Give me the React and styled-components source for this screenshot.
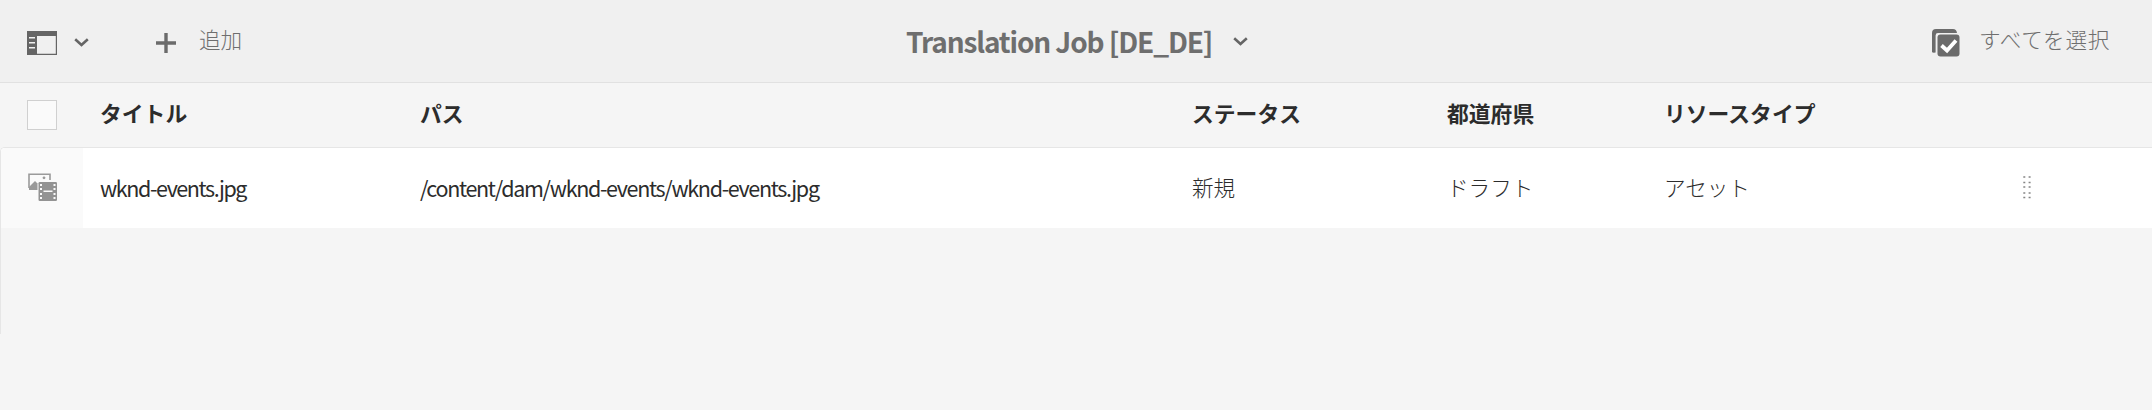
import React from "react";
import styled, { createGlobalStyle } from "styled-components";

const GlobalStyle = createGlobalStyle`
  * { box-sizing: border-box; }
  body {
    margin: 0;
    background: #f5f5f5;
    color: #2c2c2c;
    font-family: "Noto Sans CJK JP", "Noto Sans", sans-serif;
    font-size: 21.6px;
  }
  svg { display: block; flex: none; }
`;

const Page = styled.div`
  width: 100%;
  height: 410px;
  overflow: hidden;
`;

const ActionBar = styled.header`
  display: grid;
  grid-template-columns: 1fr auto 1fr;
  align-items: center;
  height: 83px;
  padding: 0 42px 0 27px;
  background: #f0f0f0;
  border-bottom: 1px solid #e1e1e1;
  color: #6e6e6e;
`;

const ActionGroup = styled.div`
  display: flex;
  align-items: center;
  padding-top: 3px;
  justify-content: ${(p) => (p.$end ? "flex-end" : "flex-start")};
`;

const Action = styled.button`
  display: flex;
  align-items: center;
  gap: ${(p) => p.$gap}px;
  margin-left: ${(p) => p.$offset || 0}px;
  padding: 0;
  border: 0;
  background: none;
  color: inherit;
  font: inherit;
  font-weight: 300;
`;

const ActionLabel = styled.span`
  line-height: 32px;
  padding-bottom: 8px;
  letter-spacing: ${(p) => p.$tracking || 0}px;
`;

const JobTitle = styled.h1`
  display: flex;
  align-items: center;
  gap: 21px;
  margin: 0;
  padding-left: 17px;
  font-size: 28px;
  font-weight: 700;
  line-height: 40px;
`;

const TitleText = styled.span`
  width: 306px;
  padding-bottom: 1px;
  white-space: nowrap;
  letter-spacing: -1.12px;
`;

const Row = styled.div`
  display: grid;
  grid-template-columns: ${(p) => p.$lead}px 320px 772px 255px 217px 359px 1fr;
`;

const HeaderRow = styled(Row)`
  height: 64px;
  font-size: 21.8px;
  font-weight: 700;
`;

const TableBody = styled.div`
  height: 187px;
  border-top: 1px solid #e6e6e6;
  border-left: 1px solid #e6e6e6;
  border-top-left-radius: 5px;
  overflow: hidden;
`;

const ItemRow = styled(Row)`
  height: 80px;
  background: #fff;
`;

const Cell = styled.div`
  display: flex;
  align-items: center;
  padding: 0 0 ${(p) => p.$lift || 0}px 17px;
  white-space: nowrap;
`;

const LatinCell = styled(Cell)`
  font-size: 21.5px;
  letter-spacing: ${(p) => p.$tracking}px;
`;

const ValueCell = styled(Cell)`
  font-weight: 300;
`;

const SelectCell = styled.div`
  padding: 17px 0 0 27px;
`;

const Checkbox = styled.div`
  width: 30px;
  height: 30px;
  background: #fafafa;
  border: 1px solid #d0d0d0;
`;

const ThumbCell = styled.div`
  padding: 24px 0 0 26px;
  background: #fafafa;
`;

const RailIcon = () => (
  <svg width="30" height="24" viewBox="0 0 30 24">
    <path fill="#656565" fillRule="evenodd" d="M0 0H30V24H0ZM10 5V22.8H28.8V5Z" />
    <path fill="none" stroke="#f0f0f0" strokeWidth="1.5" d="M2 6.7H8M2 11.7H8M2 16.7H8" />
  </svg>
);

const ChevronIcon = () => (
  <svg width="15" height="9" viewBox="0 0 15 9">
    <path d="M1.2 1.3L7.5 7L13.8 1.3" fill="none" stroke="#656565" strokeWidth="2.6" />
  </svg>
);

const PlusIcon = () => (
  <svg width="20" height="20" viewBox="0 0 20 20">
    <path d="M10 0V20M0 10H20" stroke="#6b6b6b" strokeWidth="3.4" />
  </svg>
);

const SelectAllIcon = () => (
  <svg width="28" height="28" viewBox="0 0 28 28">
    <path
      d="M0 23V4Q0 0 4 0H21Q24.5 0 25 4H6Q3.6 4 3.6 6.4V23.5Q0.5 24 0 23Z"
      fill="#6b6b6b"
    />
    <rect x="5.5" y="5.5" width="22" height="22" rx="3" fill="#6b6b6b" />
    <path d="M9.5 16.5L15 21.5L24 11.5" fill="none" stroke="#fff" strokeWidth="3.8" />
  </svg>
);

const AssetIcon = () => (
  <svg width="30" height="30" viewBox="0 0 30 30">
    <path d="M2 16V2.2H23V8" fill="none" stroke="#9a9a9a" strokeWidth="1.6" />
    <path d="M2 18V15L8 9L10.5 11.5V18Z" fill="#999" />
    <circle cx="17" cy="5.8" r="1.4" fill="#999" />
    <rect x="11.5" y="10" width="18.5" height="19" rx="1.3" fill="#939393" />
    <path
      d="M13 12H15V14H13ZM13 16H15V18H13ZM13 21H15V23H13ZM13 25H15V27H13ZM26.5 12H28.5V14H26.5ZM26.5 16H28.5V18H26.5ZM26.5 21H28.5V23H26.5ZM26.5 25H28.5V27H26.5ZM16.5 18.5H25.5V20H16.5Z"
      fill="#fafafa"
    />
  </svg>
);

const GripIcon = () => (
  <svg width="10" height="24" viewBox="0 0 10 24">
    {[1, 6.5, 11, 17, 21.5].map((y) => (
      <path key={y} d={`M0.3 ${y}H2.3M5.6 ${y}H7.6`} stroke="#858585" strokeWidth="1.7" />
    ))}
  </svg>
);

const columns = ["タイトル", "パス", "ステータス", "都道府県", "リソースタイプ"];

export default function App() {
  return (
    <Page>
      <GlobalStyle />
      <ActionBar>
        <ActionGroup>
          <Action $gap={17} aria-label="レール">
            <RailIcon />
            <ChevronIcon />
          </Action>
          <Action $gap={23} $offset={67}>
            <PlusIcon />
            <ActionLabel>追加</ActionLabel>
          </Action>
        </ActionGroup>
        <JobTitle>
          <TitleText>Translation Job [DE_DE]</TitleText>
          <ChevronIcon />
        </JobTitle>
        <ActionGroup $end>
          <Action $gap={19}>
            <SelectAllIcon />
            <ActionLabel $tracking={0.7}>すべてを選択</ActionLabel>
          </Action>
        </ActionGroup>
      </ActionBar>
      <HeaderRow $lead={83}>
        <SelectCell>
          <Checkbox />
        </SelectCell>
        {columns.map((name) => (
          <Cell key={name} $lift={6}>
            {name}
          </Cell>
        ))}
      </HeaderRow>
      <TableBody>
        <ItemRow $lead={82}>
          <ThumbCell>
            <AssetIcon />
          </ThumbCell>
          <LatinCell $lift={2} $tracking={-1.4}>
            wknd-events.jpg
          </LatinCell>
          <LatinCell $lift={2} $tracking={-1.32}>
            /content/dam/wknd-events/wknd-events.jpg
          </LatinCell>
          <ValueCell $lift={4}>新規</ValueCell>
          <ValueCell $lift={4}>ドラフト</ValueCell>
          <ValueCell $lift={4}>アセット</ValueCell>
          <Cell>
            <GripIcon />
          </Cell>
        </ItemRow>
      </TableBody>
    </Page>
  );
}
